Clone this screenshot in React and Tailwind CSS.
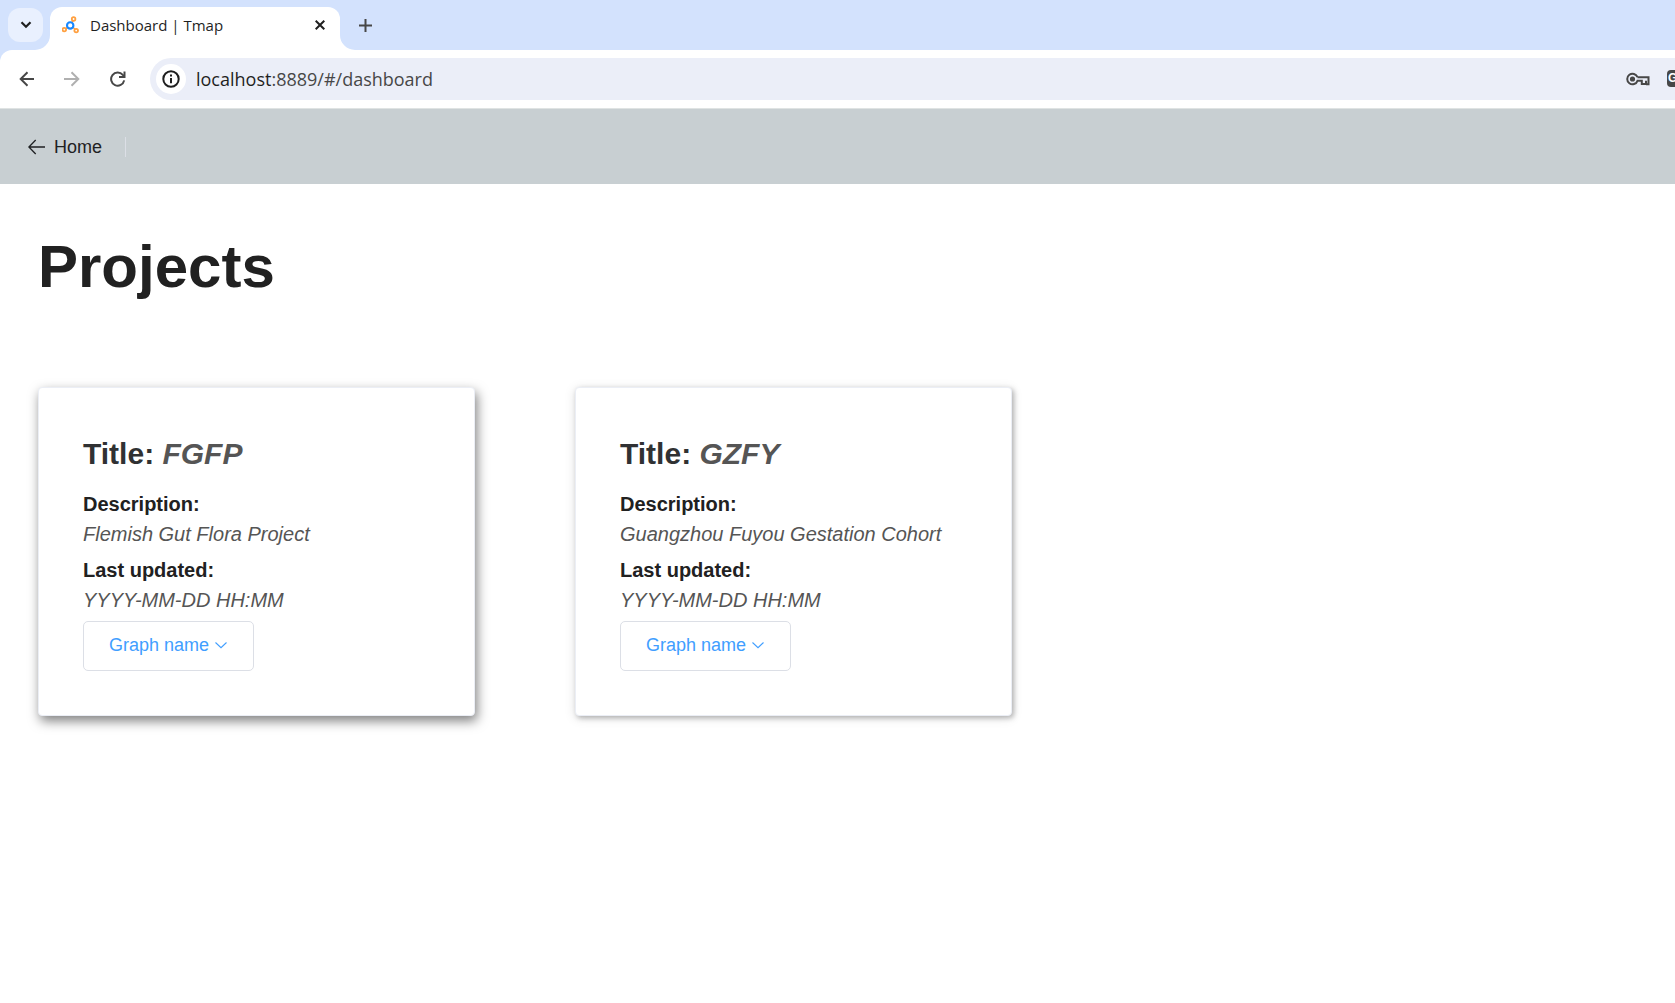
import React from "react";

const stroke = { fill: "none", stroke: "currentColor" };

function TmapLogo() {
  return (
    <svg viewBox="0 0 18 18" className="h-[18px] w-[18px] shrink-0" fill="none" strokeWidth="1.8">
      <path d="M10 6.500 11 4.500M6 11 4 12.800M11 11.500 13.500 13.500" stroke="#ffa040" strokeWidth="1.6" />
      <circle cx="11.600" cy="3" r="1.8" stroke="#ffa040" />
      <circle cx="2.300" cy="13.600" r="1.8" stroke="#ffa040" />
      <circle cx="14.200" cy="14.600" r="1.8" stroke="#ffa040" />
      <circle cx="8.200" cy="9.400" r="3.2" stroke="#1787ff" strokeWidth="2.1" />
    </svg>
  );
}

function TabStrip() {
  return (
    <div className="flex h-[50px] items-end bg-[#d3e2fd] pl-2">
      <button
        aria-label="Search tabs"
        className="mb-2 flex h-[34px] w-[35px] items-center justify-center rounded-xl bg-[#e9f0fe] text-[#1f1f1f]"
      >
        <svg viewBox="0 0 12 8" className="h-2 w-3" {...stroke} strokeWidth="2.2">
          <path d="m1.500 1.300 4.500 4.500 4.500-4.500" />
        </svg>
      </button>
      <div className="-ml-2 flex">
        <svg viewBox="0 0 15 15" className="h-[15px] w-[15px] self-end" fill="#fff">
          <path d="M15 0v15H0A15 15 0 0 0 15 0Z" />
        </svg>
        <div className="flex h-[43px] w-[290px] items-center rounded-t-xl bg-white pr-3 pb-2 pl-3">
          <TmapLogo />
          <span className="ml-2.5 font-['Open_Sans','Noto_Sans',sans-serif] text-[15px] leading-5 text-[#1f1f1f]">
            Dashboard | Tmap
          </span>
          <button aria-label="Close tab" className="ml-auto flex h-4 w-4 items-center justify-center text-[#1f1f1f]">
            <svg viewBox="0 0 10 10" className="h-2.5 w-2.5" {...stroke} strokeWidth="2">
              <path d="m.7.7 8.6 8.6M9.3.7.7 9.3" />
            </svg>
          </button>
        </div>
        <svg viewBox="0 0 15 15" className="h-[15px] w-[15px] self-end" fill="#fff">
          <path d="M0 0v15h15A15 15 0 0 1 0 0Z" />
        </svg>
      </div>
      <button aria-label="New tab" className="mb-4 ml-1 flex h-[18px] w-[13px] items-center justify-center text-[#474747]">
        <svg viewBox="0 0 13 13" className="h-[13px] w-[13px]" {...stroke} strokeWidth="2">
          <path d="M6.5 0v13M0 6.5h13" />
        </svg>
      </button>
    </div>
  );
}

function NavArrow({ flip }) {
  return (
    <svg viewBox="0 0 16 16" className="h-4 w-4" {...stroke} strokeWidth="2">
      {flip ? <path d="M0 8h14M7.5 1.2 14.3 8l-6.8 6.8" /> : <path d="M15 8H2M8.5 1.2 1.7 8l6.800 6.800" />}
    </svg>
  );
}

function Toolbar() {
  return (
    <div className="bg-[#d3e2fd]">
      <div className="flex h-[59px] items-center overflow-hidden rounded-tl-xl border-b border-[#dfe3e3] bg-white">
        <button aria-label="Back" className="ml-[19px] text-[#474747]">
          <NavArrow />
        </button>
        <button aria-label="Forward" className="ml-[29px] text-[#b0b0b0]">
          <NavArrow flip />
        </button>
        <button aria-label="Reload" className="ml-[30px] text-[#474747]">
          <svg viewBox="0 0 16 16" className="h-4 w-4" {...stroke} strokeWidth="2">
            <path d="M14.2 9.4A6.600 6.600 0 1 1 12.800 3.800L14.400 5.600" />
            <path d="M14.500.5v5.400H9" />
          </svg>
        </button>
        <div className="ml-6 flex h-[42px] min-w-0 flex-1 items-center rounded-l-full bg-[#ebeef8] pl-1.5">
          <button
            aria-label="Site information"
            className="flex h-[30px] w-[30px] shrink-0 items-center justify-center rounded-full bg-white text-[#1f1f1f]"
          >
            <svg viewBox="0 0 18 18" className="h-[18px] w-[18px]" {...stroke} strokeWidth="2">
              <circle cx="9" cy="9" r="7.7" />
              <path d="M9 8v5.2M9 4.6v2" />
            </svg>
          </button>
          <div className="relative ml-2.5 flex h-full flex-1 items-center font-['Open_Sans','Noto_Sans',sans-serif] text-[18px]">
            <input
              aria-label="Address"
              defaultValue="localhost:8889/#/dashboard"
              className="w-full bg-transparent text-transparent outline-none"
            />
            <span aria-hidden="true" className="pointer-events-none absolute left-0 text-[#474747]">
              <span className="text-[#1f1f1f]">localhost</span>:8889/#/dashboard
            </span>
          </div>
          <button aria-label="Saved passwords" className="text-[#474747]">
            <svg viewBox="0 0 24 14" className="h-3.5 w-6" {...stroke} strokeWidth="2">
              <path d="M11.500 5.200A5.300 5.300 0 1 0 11.500 8.800h4.300V12h4.200V8.800M11.500 5.200h11v7h-2.500" />
              <circle cx="6.500" cy="7" r="1.6" fill="currentColor" />
            </svg>
          </button>
          <button aria-label="Translate" className="mb-0.5 ml-[17px] w-2 overflow-hidden">
            <span className="block h-[17px] w-[17px] rounded-sm bg-[#474747] pl-px text-left font-['Liberation_Sans',Arial,sans-serif] text-xs leading-[17px] font-bold text-white">
              G
            </span>
          </button>
        </div>
      </div>
    </div>
  );
}

function PageHeader() {
  return (
    <header className="flex h-[75px] items-center bg-[#c8cfd2] pl-7">
      <a href="#/" className="flex items-center text-[18px] leading-6 text-[#1f2123]">
        <svg viewBox="0 0 17 16" className="mr-[9px] h-4 w-[17px]" {...stroke} strokeWidth="1.3">
          <path d="M17 8H1M7.700 1 .9 8l6.800 7" />
        </svg>
        Home
      </a>
      <div className="ml-[23px] h-5 w-px bg-[#dcdfe6]" />
    </header>
  );
}

function ProjectCard({ title, description, updated, active }) {
  return (
    <article
      className={
        "w-[437px] rounded border border-[#ebeef5] bg-white px-11 pt-[46px] pb-11 text-[20px] leading-[30px] text-[#555] " +
        (active
          ? "shadow-[2px_5px_12px_rgba(0,0,0,0.5)]"
          : "shadow-[2px_2px_5px_rgba(0,0,0,0.25),0_2px_12px_rgba(0,0,0,0.12)]")
      }
    >
      <h2 className="mb-[15px] text-[30px] leading-10 font-bold text-[#303133]">
        Title: <em className="text-[#555]">{title}</em>
      </h2>
      <dl>
        <dt className="font-bold text-[#212121]">Description:</dt>
        <dd className="italic">{description}</dd>
        <dt className="mt-1.5 font-bold text-[#212121]">Last updated:</dt>
        <dd className="italic">{updated}</dd>
      </dl>
      <button className="mt-1.5 flex h-[50px] items-center rounded-[5px] border border-[#dcdfe6] bg-white pr-[26px] pb-0.5 pl-[25px] text-[18px] leading-6 text-[#409eff]">
        Graph name
        <svg viewBox="0 0 12 8" className="ml-1.5 h-2 w-3" {...stroke} strokeWidth="1.1">
          <path d="m.5 1.500 5.500 5.200L11.500 1.500" />
        </svg>
      </button>
    </article>
  );
}

const projects = [
  { title: "FGFP", description: "Flemish Gut Flora Project", updated: "YYYY-MM-DD HH:MM", active: true },
  { title: "GZFY", description: "Guangzhou Fuyou Gestation Cohort", updated: "YYYY-MM-DD HH:MM" },
];

export default function App() {
  return (
    <div className="min-h-screen bg-white font-['Liberation_Sans',Arial,sans-serif]">
      <TabStrip />
      <Toolbar />
      <PageHeader />
      <main className="px-[38px] pt-12">
        <h1 className="text-[60px] leading-[70px] font-bold text-[#212121]">Projects</h1>
        <div className="mt-[85px] flex flex-wrap gap-[100px]">
          {projects.map((p) => (
            <ProjectCard key={p.title} {...p} />
          ))}
        </div>
      </main>
    </div>
  );
}
